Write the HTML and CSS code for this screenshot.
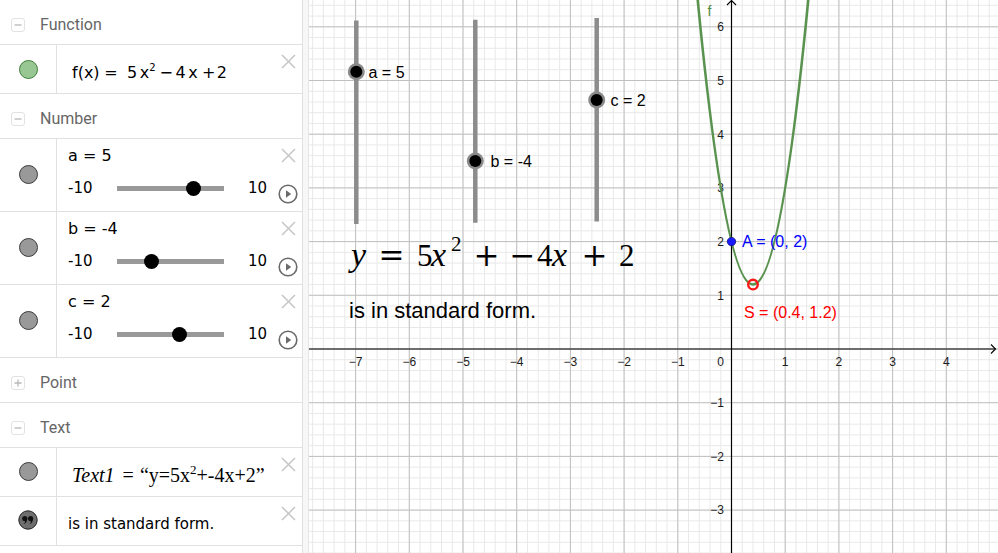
FILE: index.html
```html
<!DOCTYPE html>
<html>
<head>
<meta charset="utf-8">
<title>Standard form</title>
<link rel="stylesheet" href="styles.css">
</head>
<body>
<div class="app">
  <aside class="algebra">
    <div class="group-head">
      <svg class="toggle" viewBox="0 0 14 14"><rect x=".5" y=".5" width="13" height="13" rx="2.5" class="tg-box"/><path d="M3.5 7h7" class="tg-mark"/></svg>
      <span class="group-title">Function</span>
    </div>
    <div class="item short">
      <div class="marker"><span class="dot dot-green"></span></div>
      <div class="content formula">f(x)<span class="rel">=</span>5<span class="v">x</span><sup>2</sup><span class="bin">−</span>4<span class="v">x</span><span class="bin bin-plus">+</span>2</div>
      <div class="actions"><svg class="close" viewBox="0 0 15 15"><path d="M1 1L14 14M14 1L1 14"/></svg></div>
    </div>

    <div class="group-head">
      <svg class="toggle" viewBox="0 0 14 14"><rect x=".5" y=".5" width="13" height="13" rx="2.5" class="tg-box"/><path d="M3.5 7h7" class="tg-mark"/></svg>
      <span class="group-title">Number</span>
    </div>
    <div class="item tall">
      <div class="marker"><span class="dot"></span></div>
      <div class="content slider-content">
        <div class="slider-label">a = 5</div>
        <div class="slider-line"><span class="min">-10</span><span class="track"><span class="knob" style="left:69.3px"></span></span><span class="max">10</span></div>
      </div>
      <div class="actions"><svg class="close" viewBox="0 0 15 15"><path d="M1 1L14 14M14 1L1 14"/></svg><svg class="play" viewBox="0 0 20 20"><circle cx="10" cy="10" r="8.8"/><path d="M8 6.3L13.2 10L8 13.7Z"/></svg></div>
    </div>
    <div class="item tall">
      <div class="marker"><span class="dot"></span></div>
      <div class="content slider-content">
        <div class="slider-label">b = -4</div>
        <div class="slider-line"><span class="min">-10</span><span class="track"><span class="knob" style="left:27.4px"></span></span><span class="max">10</span></div>
      </div>
      <div class="actions"><svg class="close" viewBox="0 0 15 15"><path d="M1 1L14 14M14 1L1 14"/></svg><svg class="play" viewBox="0 0 20 20"><circle cx="10" cy="10" r="8.8"/><path d="M8 6.3L13.2 10L8 13.7Z"/></svg></div>
    </div>
    <div class="item tall">
      <div class="marker"><span class="dot"></span></div>
      <div class="content slider-content">
        <div class="slider-label">c = 2</div>
        <div class="slider-line"><span class="min">-10</span><span class="track"><span class="knob" style="left:55.3px"></span></span><span class="max">10</span></div>
      </div>
      <div class="actions"><svg class="close" viewBox="0 0 15 15"><path d="M1 1L14 14M14 1L1 14"/></svg><svg class="play" viewBox="0 0 20 20"><circle cx="10" cy="10" r="8.8"/><path d="M8 6.3L13.2 10L8 13.7Z"/></svg></div>
    </div>

    <div class="group-head">
      <svg class="toggle" viewBox="0 0 14 14"><rect x=".5" y=".5" width="13" height="13" rx="2.5" class="tg-box"/><path d="M3.5 7h7M7 3.5v7" class="tg-mark"/></svg>
      <span class="group-title">Point</span>
    </div>

    <div class="group-head">
      <svg class="toggle" viewBox="0 0 14 14"><rect x=".5" y=".5" width="13" height="13" rx="2.5" class="tg-box"/><path d="M3.5 7h7" class="tg-mark"/></svg>
      <span class="group-title">Text</span>
    </div>
    <div class="item short">
      <div class="marker"><span class="dot"></span></div>
      <div class="content serif-row"><span class="it">Text1</span><span class="eq">=</span>“y=5x<sup>2</sup>+-4x+2”</div>
      <div class="actions"><svg class="close" viewBox="0 0 15 15"><path d="M1 1L14 14M14 1L1 14"/></svg></div>
    </div>
    <div class="item short">
      <div class="marker">
        <svg class="quote" viewBox="0 0 20 20">
          <circle cx="10" cy="10" r="9.2" class="q-bg"/>
          <circle cx="6.8" cy="8.6" r="2.6" class="q-mark"/>
          <path d="M8.9 9.4Q9.1 12.9 5.6 14.2Q7.4 12.6 7.1 10.9Z" class="q-mark"/>
          <circle cx="12.6" cy="8.6" r="2.6" class="q-mark"/>
          <path d="M14.7 9.4Q14.9 12.9 11.4 14.2Q13.2 12.6 12.9 10.9Z" class="q-mark"/>
        </svg>
      </div>
      <div class="content text-row">is in standard form.</div>
      <div class="actions"><svg class="close" viewBox="0 0 15 15"><path d="M1 1L14 14M14 1L1 14"/></svg></div>
    </div>
  </aside>

  <div class="splitter"></div>

  <main class="graphics">
    <svg class="canvas" width="689" height="553" viewBox="309 0 689 553">
      <defs>
        <pattern id="gmin" patternUnits="userSpaceOnUse" x="731" y="348.5" width="10.74" height="10.74">
          <rect width="1" height="10.74" class="g-minor"/>
          <rect width="10.74" height="1" class="g-minor"/>
        </pattern>
        <pattern id="gmaj" patternUnits="userSpaceOnUse" x="731" y="348.5" width="53.7" height="53.7">
          <rect width="1" height="53.7" class="g-major"/>
          <rect width="53.7" height="1" class="g-major"/>
        </pattern>
      </defs>
      <rect x="309" y="0" width="689" height="553" class="bg"/>
      <rect x="309" y="0" width="689" height="553" fill="url(#gmin)"/>
      <rect x="309" y="0" width="689" height="553" fill="url(#gmaj)"/>

      <!-- axes -->
      <path d="M309 349H995.5M731.5 0.5V553" class="axis"/>
      <path d="M727 5L731.5 0.5L736 5M991 344.5L995.5 349L991 353.5" class="axis-arrow"/>

      <!-- x labels -->
      <g class="ax-x">
        <text x="355.6" y="365.5">−7</text>
        <text x="409.3" y="365.5">−6</text>
        <text x="463.0" y="365.5">−5</text>
        <text x="516.7" y="365.5">−4</text>
        <text x="570.4" y="365.5">−3</text>
        <text x="624.1" y="365.5">−2</text>
        <text x="677.8" y="365.5">−1</text>
        <text x="720.6" y="365.5">0</text>
        <text x="785.2" y="365.5">1</text>
        <text x="838.9" y="365.5">2</text>
        <text x="892.6" y="365.5">3</text>
        <text x="946.3" y="365.5">4</text>
      </g>
      <g class="ax-y">
        <text x="724" y="31.1">6</text>
        <text x="724" y="84.8">5</text>
        <text x="724" y="138.5">4</text>
        <text x="724" y="192.2">3</text>
        <text x="724" y="245.9">2</text>
        <text x="724" y="299.6">1</text>
        <text x="724" y="407">−1</text>
        <text x="724" y="460.7">−2</text>
        <text x="724" y="514.4">−3</text>
      </g>

      <!-- sliders on canvas -->
      <path d="M356.3 20.5V224M475.3 19.7V222.7M596.7 18V221.5" class="vtrack"/>
      <circle cx="356.3" cy="71.7" r="8.5" class="halo"/>
      <circle cx="356.3" cy="71.7" r="6" class="knob-c"/>
      <circle cx="475.3" cy="161" r="8.5" class="halo"/>
      <circle cx="475.3" cy="161" r="6" class="knob-c"/>
      <circle cx="596.7" cy="100" r="8.5" class="halo"/>
      <circle cx="596.7" cy="100" r="6" class="knob-c"/>
      <text x="368.5" y="78" class="lbl">a = 5</text>
      <text x="490.5" y="166.5" class="lbl">b = -4</text>
      <text x="610.5" y="105.5" class="lbl">c = 2</text>

      <!-- formula text -->
      <text class="latex" y="266">
        <tspan x="351" class="it big">y</tspan><tspan x="378.5" class="op">=</tspan><tspan x="417">5</tspan><tspan x="431" class="it big">x</tspan><tspan x="451" y="251" class="sup2">2</tspan><tspan x="473.5" y="266" class="op">+</tspan><tspan x="509.5" class="op">−</tspan><tspan x="537">4</tspan><tspan x="552" class="it big">x</tspan><tspan x="581.5" class="op">+</tspan><tspan x="619">2</tspan>
      </text>
      <text x="349" y="318" class="plain">is in standard form.</text>

      <!-- function -->
      <path d="M693.91 -40.33Q752.98 609.45 812.05 -40.33" class="curve"/>
      <text x="707.5" y="15.5" class="flabel">f</text>

      <!-- points -->
      <circle cx="731.5" cy="241.6" r="4.2" class="pt-a"/>
      <text x="742" y="247" class="lbl lbl-a">A = (0, 2)</text>
      <circle cx="752.98" cy="284.6" r="4.8" class="pt-s"/>
      <text x="744" y="317.5" class="lbl lbl-s">S = (0.4, 1.2)</text>
    </svg>
  </main>
</div>
</body>
</html>
```

FILE: styles.css
```css
* { box-sizing: border-box; }
html, body { margin: 0; padding: 0; background: #fff; }
body {
  font-family: "DejaVu Sans", sans-serif;
  color: #000;
  overflow: hidden;
  width: 998px;
  height: 553px;
}

.app {
  display: flex;
  width: 998px;
  height: 553px;
}

/* ---------- algebra panel ---------- */
.algebra {
  width: 302px;
  flex: none;
  display: flex;
  flex-direction: column;
  background: #fff;
}

.group-head {
  height: 45px;
  flex: none;
  border-bottom: 1px solid #e0e0e0;
  display: flex;
  align-items: center;
  padding: 5px 0 0 11px;
  gap: 15px;
}
.toggle { width: 14px; height: 14px; display: block; flex: none; }
.tg-box { fill: none; stroke: #e2e2e2; stroke-width: 1; }
.tg-mark { stroke: #b8b8b8; stroke-width: 1.3; fill: none; }
.group-title {
  font-family: Roboto, "Liberation Sans", sans-serif;
  font-size: 16px;
  color: #666;
}

.item {
  display: flex;
  flex: none;
  border-bottom: 1px solid #e0e0e0;
}
.item.short { height: 49px; }
.item.tall { height: 73px; }

.marker {
  width: 57px;
  flex: none;
  border-right: 1px solid #e0e0e0;
  display: flex;
  align-items: center;
  justify-content: center;
}
.dot {
  width: 19px;
  height: 19px;
  border-radius: 50%;
  background: #999;
  border: 1px solid #3a3a3a;
  margin-top: -2px;
}
.dot-green { background: #99c794; border-color: #3f7f37; margin-top: 0; }

.quote { width: 20px; height: 20px; display: block; margin-top: -3px; }
.q-bg { fill: #6e6e6e; stroke: #222; stroke-width: 1; }
.q-mark { fill: #111; }

.content {
  flex: 1;
  min-width: 0;
  padding-left: 11px;
  white-space: nowrap;
}
.content sup {
  font-size: 10px;
  line-height: 0;
  vertical-align: 7px;
}
.formula {
  padding-left: 15px;
  padding-top: 17.5px;
  font-size: 16px;
  line-height: 20px;
}
.formula .rel { margin: 0 9.3px 0 4.7px; }
.formula .v { margin-left: 2.7px; }
.formula .bin { margin: 0 2.5px 0 3.8px; }
.formula .bin-plus { margin: 0 1.3px 0 4.3px; }

.serif-row {
  padding-left: 15px;
  padding-top: 16.5px;
  font-family: "Liberation Serif", serif;
  font-size: 20px;
  line-height: 20px;
}
.serif-row sup { font-size: 13px; vertical-align: 8px; }
.serif-row .eq { margin: 0 6px 0 8px; }
.it { font-style: italic; }
.text-row {
  padding-top: 17px;
  font-size: 15px;
  line-height: 20px;
}

.slider-content {
  display: flex;
  flex-direction: column;
  padding-top: 6.5px;
}
.slider-label {
  font-size: 16px;
  line-height: 20px;
}
.slider-line {
  display: flex;
  align-items: center;
  height: 20px;
  margin-top: 12.5px;
  font-size: 15px;
}
.min { width: 49px; flex: none; }
.track {
  width: 107px;
  height: 5px;
  flex: none;
  background: #999;
  position: relative;
}
.knob {
  position: absolute;
  top: -5px;
  width: 15px;
  height: 15px;
  border-radius: 50%;
  background: #000;
}
.max { margin-left: 24px; }

.actions {
  width: 28px;
  flex: none;
  display: flex;
  flex-direction: column;
  align-items: flex-end;
  justify-content: space-between;
  padding: 9px 6px 7.5px 0;
}
.close { width: 15px; height: 15px; display: block; }
.close path { stroke: #c6c6c6; stroke-width: 1.5; fill: none; }
.play { width: 20px; height: 20px; display: block; margin-right: -1.5px; }
.play circle { fill: none; stroke: #6a6a6a; stroke-width: 1.6; }
.play path { fill: #6a6a6a; }

/* ---------- splitter ---------- */
.splitter {
  width: 7px;
  flex: none;
  background: #f7f7f7;
  border-left: 1px solid #e0e0e0;
  border-right: 1px solid #e6e6e6;
}

/* ---------- graphics ---------- */
.graphics {
  flex: 1;
  min-width: 0;
  overflow: hidden;
}
.canvas { display: block; }
.bg { fill: #fff; }
.g-minor { fill: #e8e8e8; }
.g-major { fill: #c0c0c0; }
.axis { stroke: #000; stroke-width: 1.2; fill: none; }
.axis-arrow { stroke: #000; stroke-width: 1.1; fill: none; }

.ax-x text, .ax-y text {
  font-family: "Liberation Sans", Arial, sans-serif;
  font-size: 12px;
  fill: #1a1a1a;
}
.ax-x text { text-anchor: middle; }
.ax-y text { text-anchor: end; }

.vtrack { stroke: #8c8c8c; stroke-width: 4.5; fill: none; }
.halo { fill: #8a8a8a; }
.knob-c { fill: #000; }

.lbl {
  font-family: "Liberation Sans", Arial, sans-serif;
  font-size: 16px;
  fill: #000;
}
.lbl-a { fill: #0000ff; }
.lbl-s { fill: #ff0000; }

.latex {
  font-family: "Liberation Serif", "Times New Roman", serif;
  font-size: 31px;
  fill: #000;
}
.latex .it { font-style: italic; }
.latex .big { font-size: 34px; }
.latex .op { font-family: "DejaVu Serif", serif; font-size: 31px; }
.latex .sup2 { font-size: 21px; }

.plain {
  font-family: "Liberation Sans", Arial, sans-serif;
  font-size: 22px;
  fill: #000;
}

.curve { stroke: #5a934f; stroke-width: 2.6; fill: none; }
.flabel {
  font-family: "Liberation Sans", Arial, sans-serif;
  font-size: 14px;
  fill: #4f8a44;
}
.pt-a { fill: #1a1aff; stroke: #10107a; stroke-width: 0.8; }
.pt-s { fill: none; stroke: #ff1a1a; stroke-width: 2.4; }
```
